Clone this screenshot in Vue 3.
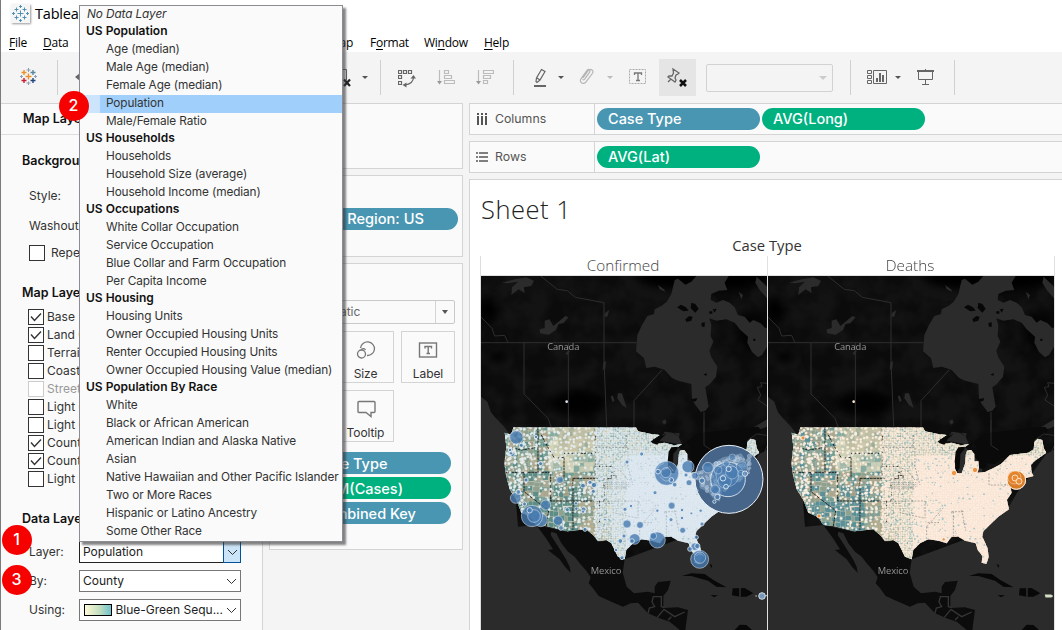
<script setup>
const menuGroups = [
  { title: 'US Population', items: ['Age (median)', 'Male Age (median)', 'Female Age (median)', 'Population', 'Male/Female Ratio'] },
  { title: 'US Households', items: ['Households', 'Household Size (average)', 'Household Income (median)'] },
  { title: 'US Occupations', items: ['White Collar Occupation', 'Service Occupation', 'Blue Collar and Farm Occupation', 'Per Capita Income'] },
  { title: 'US Housing', items: ['Housing Units', 'Owner Occupied Housing Units', 'Renter Occupied Housing Units', 'Owner Occupied Housing Value (median)'] },
  { title: 'US Population By Race', items: ['White', 'Black or African American', 'American Indian and Alaska Native', 'Asian', 'Native Hawaiian and Other Pacific Islander', 'Two or More Races', 'Hispanic or Latino Ancestry', 'Some Other Race'] },
]
const layers = [
  ['Base', 1], ['Land C', 1], ['Terrain', 0], ['Coastl', 0], ['Streets', 0, 1],
  ['Light C', 0], ['Light C', 0], ['Count', 1], ['Count', 1], ['Light S', 0],
]

// Seeded generator keeps the county pattern stable between renders
function rng(seed) {
  let s = seed
  return () => ((s = (s * 16807) % 2147483647) / 2147483647)
}
function build(kind) {
  const r = rng(4711)
  const blue = kind === 'blue'
  const teal = blue ? '#5d8d87' : '#5b9098'
  const west = [teal, teal, '#8fa08e', '#a29e86', '#aba68e', '#739e94', '#bcbea4']
  const plain = ['#d5d3b5', '#c2c9b1', '#9fb8aa', '#dedcc2', '#c9cfb9', '#86aca2']
  const cells = []
  const dots = []
  for (let y = 20; y < 440; y += 15) {
    for (let x = 76; x < 365; x += 15) {
      const north = y < 150 && x > 210 && x < 352
      const desert = y > 240 && x < 290
      const basin = (y > 150 && y < 245 && x > 135 && x < 220) || (y > 95 && y < 175 && x > 255 && x < 350)
      const c = desert ? (r() < .85 ? teal : '#8da390') : (north ? plain : west)[Math.floor(r() * 6)]
      cells.push({ x: x + r() * 7 - 3, y: y + r() * 7 - 3, w: 13 + r() * 13, h: 12 + r() * 10, c })
      if (!(desert || basin) || r() < .5) dots.push({ x: x + r() * 9, y: y + r() * 9, r: 3 + r() * 1.2 })
      if (!desert && !basin && r() < .45) dots.push({ x: x + r() * 14, y: y + r() * 14, r: 2.5 + r() * 1.4 })
      if ((x < 125 || (x > 290 && y > 170 && y < 240)) && r() < .8) dots.push({ x: x + r() * 14, y: y + r() * 14, r: 4 })
    }
  }
  const marks = []
  for (let y = 22; y < 440; y += 7) {
    for (let x = 352; x < 850; x += 7) {
      const sparse = x < 440 || y < 100 || x > 800
      if (sparse) {
        cells.push({ x: x + r() * 3, y: y + r() * 3, w: 7, h: 7, c: plain[Math.floor(r() * 6)] })
      }
      dots.push({ x: x + r() * 4, y: y + r() * 4, r: sparse ? 2.7 + r() : 3 + r() * 1.5 })
      const rough = y < 150 || (x > 660 && y < 200) || (x < 540 && y > 240)
      if (r() < (rough ? .2 : .07)) marks.push({ x: x + r() * 5, y: y + r() * 5, w: 2 + r() * 4, h: 2 + r() * 3 })
    }
  }
  return { cells, dots, marks }
}
const bubbles = [
  [115,52,20],[130,76,6],[96,90,5],[103,104,6],[99,100,5],[174,51,5],[188,131,6],[144,180,6],[246,180,10],[315,197,7],[336,187,6],[348,195,8],[346,214,6],[113,234,16],[121,216,7],[140,252,6],[203,255,15],
  [188,300,20],[162,288,32],[168,288,19],[155,271,8],[240,302,14],[268,269,6],[249,324,7],[294,250,5],[295,266,5],[317,268,7],[315,275,5],[321,328,6],
  [447,126,6],[491,102,6],[566,160,36],[564,158,15],[540,155,7],[580,180,7],[590,194,7],[630,140,18],[651,167,10],[624,165,6],[633,188,9],[690,143,16],[672,182,8],[711,208,13],
  [581,257,10],[579,299,6],[531,218,6],[538,272,5],[447,312,12],[486,315,10],[441,268,6],[459,258,5],[427,363,7],[438,348,6],[470,357,16],[462,363,7],[538,360,24],[526,348,10],[614,331,9],[672,312,6],[655,352,6],[650,380,11],[658,378,8],[636,387,7],[665,418,27],[666,413,17],[640,280,4],[612,270,5],[612,294,5],[668,272,5],[432,413,6],[414,390,5],[381,299,4],[718,231,8],[709,245,5],
]
const nyBubbles = [[750,178,52],[748,166,34],[740,184,20],[762,158,19],[792,142,17],[788,160,9],[801,161,8],[752,147,8],[720,150,12],[763,112,10],[745,130,9],[735,175,8],[714,212,12],[744,200,7]]
const deaths = [[114,54,6],[162,288,6],[567,159,8],[630,150,8],[536,358,5],[754,180,28],[748,172,20],[750,174,9],[762,184,9]]
const maps = [
  { id: 'blue', name: 'Confirmed', fill: '#dce6ee', dot: '#e4edf4', mark: '#a9c2ca', ...build('blue') },
  { id: 'orange', name: 'Deaths', fill: '#fae6d6', dot: '#fff0e3', mark: '#a5c6c6', ...build('orange') },
]
const dust = (() => {
  const r = rng(909)
  const out = []
  while (out.length < 95) {
    const x = 658 + r() * 158
    const y = 100 + r() * 130
    if (y > 150 - (x - 658) * .4 && y < 268 - (x - 658) * .68) out.push({ x, y, r: 3 + r() * 3.5 })
  }
  return out
})()
const usPath = 'M80 38L100 44L106 22L474 22L480 34L520 42L545 45L522 60L535 72L560 68L588 76L612 72L596 84L580 90L572 108L570 145L576 160L590 160L600 132L602 104L606 92L618 90L628 102L628 124L640 124L642 142L638 158L660 156L690 142L708 132L735 105L790 98L806 88L808 66L818 56L832 60L836 84L844 98L810 122L798 134L800 158L806 168L770 178L736 198L740 218L726 240L732 268L700 290L675 314L655 334L652 350L668 385L671 412L664 432L650 428L652 408L638 390L632 370L600 362L580 350L560 350L545 370L520 362L490 358L465 370L445 390L440 418L420 410L400 370L385 360L360 362L345 345L325 328L268 334L205 318L175 315L160 292L130 278L115 240L95 208L84 165L79 130L85 80Z'
</script>

<template>
  <div class="app">
    <header class="titlebar">
      <svg class="logo" width="19" height="19" viewBox="0 0 19 19">
        <g stroke="#4f91b5" stroke-width="1"><path d="M9.500 6.500v6M6.500 9.500h6M9.500 1v3M8 2.500h3M9.500 15v3M8 16.500h3M5.500 3.500v4M3.500 5.500h4M13.500 3.500v4M11.500 5.500h4M5.500 11.500v4M3.500 13.500h4M13.500 11.500v4M11.500 13.500h4M2.500 8v3M1 9.500h3M16.500 8v3M15 9.500h3" /></g>
      </svg>
      <span>Tablea</span>
    </header>
    <nav class="menubar">
      <span class="file"><u>F</u>ile</span><span class="data"><u>D</u>ata</span>
      <span class="map"><u>M</u>ap</span><span class="format">F<u>o</u>rmat</span><span class="window">Wi<u>n</u>dow</span><span><u>H</u>elp</span>
    </nav>
    <div class="toolbar">
      <svg class="t-home" width="18" height="51" viewBox="20 52 18 51" fill="none" stroke-width="1.4">
        <path stroke="#eb912c" d="M28.500 73.500v6M25.500 76.500h6M24 70v5M21.500 72.500h5" />
        <path stroke="#c72035" d="M24 78v5M21.500 80.500h5" />
        <path stroke="#1f457e" d="M33 78v5M30.500 80.500h5" />
        <path stroke="#59879b" d="M33 70v5M30.500 72.500h5" />
        <path stroke="#8ba0b8" stroke-width="1" d="M28.500 68v4M26.500 70h4M28.500 81.500v3.500M26.500 83h4M21.500 75v3M20 76.500h3M35.500 75v3M34 76.500h3" />
      </svg>
      <i class="sep s1"></i>
      <svg class="t-back" width="8" height="51" viewBox="75 52 8 51"><path d="M75 77l5-4v8z" fill="#666" /></svg>
      <svg class="t-clear" width="18" height="51" viewBox="334 52 18 51"><path d="M334 69.500h12.500v11" fill="none" stroke="#666" /><path d="M344 79.500l6 6.500M350 79.500l-6 6.500" stroke="#222" stroke-width="2.2" /></svg>
      <i class="caret c1"></i><i class="sep s2"></i>
      <svg class="t-swap" width="18" height="51" viewBox="398 52 18 51" fill="none" stroke="#666" stroke-width="1.200"><path d="M398.500 70.500h3v3h-3zM403.500 70.500h3v3h-3zM408.500 70.500h3v3h-3zM398.500 75.500h3v3h-3zM398.500 81.500h3v3h-3z" /><path d="M413.500 77q0 7-9 8" /><path d="M413.500 75l-3 3.500h5.500zM402.500 85l4-2.500v5z" fill="#666" stroke="none" /></svg>
      <svg class="t-sort" width="18" height="51" viewBox="437 52 18 51" fill="none" stroke="#bcbcbc" stroke-width="1.200"><path d="M439.500 70v13M444.500 70.500h4v3h-4zM444.500 75.500h7v3h-7zM444.500 80.500h10v3h-10z" /><path d="M437 81h5l-2.500 3.500z" fill="#999" stroke="none" /></svg>
      <svg class="t-sort" width="18" height="51" viewBox="476 52 18 51" fill="none" stroke="#bcbcbc" stroke-width="1.200"><path d="M478.500 70v13M483.500 70.500h10v3h-10zM483.500 75.500h7v3h-7zM483.500 80.500h4v3h-4z" /><path d="M476 81h5l-2.500 3.500z" fill="#999" stroke="none" /></svg>
      <i class="sep s3"></i>
      <svg class="t-pen" width="14" height="51" viewBox="533 52 14 51" fill="none" stroke="#666" stroke-width="1.200"><path d="M541.500 69.500l3.500 2-5 8.500-3 2.500-1-1 .5-3.500zM537 78l3 2" /><path d="M534 86h12" stroke-width="2" /></svg>
      <i class="caret c2"></i>
      <svg class="t-clip" width="15" height="51" viewBox="579 52 15 51" fill="none" stroke="#b5b5b5" stroke-width="1.200"><path d="M583 78l5-7q2-2.500 4-1t0 4l-6.500 8.500q-2 1.800-4 .3t-.5-4l6-8.500q1.500-1.500 2.500-.5t0 2.500l-5 7q-1 1-2 0" /></svg>
      <i class="caret c3 pale"></i>
      <svg class="t-text" width="18" height="51" viewBox="629 52 18 51"><rect x="629.500" y="69.500" width="16" height="14" fill="none" stroke="#aaa" stroke-dasharray="2 1" /><path d="M634.500 75v-2h7v2M638 73v7.500M636 80.500h4" fill="none" stroke="#777" stroke-width="1.300" /></svg>
      <div class="pin-button"><svg width="37" height="37" viewBox="659 59 37 37" fill="none" stroke="#666" stroke-width="1.300"><path d="M673 69l6 4-1 1-2 1-1 3 1 2-1 2-7-5 1-1h3l1.500-3zM671 79l-3 3" /><path d="M680 80l6 6M686 80l-6 6" stroke="#111" stroke-width="2.500" /></svg></div>
      <div class="tool-select"><i class="caret wide"></i></div>
      <i class="sep s4"></i>
      <svg class="t-chart" width="21" height="51" viewBox="867 52 21 51" fill="none" stroke="#666"><path d="M867.500 70.500h4v3h-4zM867.500 75.500h4v3h-4zM867.500 80.500h4v3h-4zM873.500 70.500h13v13h-13z" /><path d="M877 82v-4M880 82v-9M883 82v-7" stroke-width="2" /></svg>
      <i class="caret c4"></i>
      <svg class="t-show" width="18" height="51" viewBox="917 52 18 51" fill="none" stroke="#666"><path d="M917 71h17" stroke-width="2" /><path d="M918.500 71v8.500h14V71M925.500 69v2M925.500 80v4M922 84.500h7" /></svg>
      <i class="sep s5"></i>
    </div>

    <main class="content">
      <aside class="layers">
        <div class="pane-title">Map Layers</div>
        <h3 class="h-bg">Backgrou</h3>
        <div class="line style-line">Style:</div>
        <div class="line wash-line">Washout</div>
        <div class="line repeat"><i class="check"></i>Repe</div>
        <h3 class="h-layers">Map Laye</h3>
        <div class="checks">
          <div v-for="(l, i) in layers" :key="i" class="layer" :class="{ disabled: l[2] }">
            <i class="check"><svg v-if="l[1]" width="14" height="14" viewBox="0 0 14 14"><path d="M2 6.500l3.500 4L12 3.500" fill="none" stroke="#333" stroke-width="1.400" /></svg></i>{{ l[0] }}
          </div>
        </div>
        <h3 class="h-data">Data Laye</h3>
        <div class="field"><label>Layer:</label><div class="select open"><span>Population</span><b><svg width="11" height="7" viewBox="0 0 11 7"><path d="M1 1l4.500 4.500L10 1" fill="none" stroke="#333" /></svg></b></div></div>
        <div class="field"><label>By:</label><div class="select"><span>County</span><b><svg width="11" height="7" viewBox="0 0 11 7"><path d="M1 1l4.500 4.500L10 1" fill="none" stroke="#333" /></svg></b></div></div>
        <div class="field"><label>Using:</label><div class="select"><i class="ramp"></i><span class="tight">Blue-Green Sequ...</span><b><svg width="11" height="7" viewBox="0 0 11 7"><path d="M1 1l4.500 4.500L10 1" fill="none" stroke="#333" /></svg></b></div></div>
      </aside>

      <section class="cards">
        <div class="card pages"></div>
        <div class="card filters"><div class="pill teal">Country Region: US</div></div>
        <div class="card marks">
          <div class="mark-type"><span>Automatic</span><b><i class="caret big"></i></b></div>
          <div class="buttons">
            <div class="mark"></div>
            <div class="mark"><svg width="20" height="20" viewBox="0 0 20 20" fill="none" stroke="#777" stroke-width="1.300"><path d="M4.500 8a7 6.800 0 1 1 6.500 7.500" /><circle cx="5.500" cy="14" r="4" /><path d="M5 9.500q3-2 4.500.5" /></svg><span>Size</span></div>
            <div class="mark"><svg width="20" height="20" viewBox="0 0 20 20" fill="none" stroke="#777" stroke-width="1.400"><rect x="1.500" y="3" width="17" height="14" /><path d="M7 8.500v-2h6.500v2M10.200 6.500v7M8.500 13.500h3.500" /></svg><span>Label</span></div>
            <div class="mark"></div>
            <div class="mark"><svg width="20" height="20" viewBox="0 0 20 20" fill="none" stroke="#777" stroke-width="1.400"><path d="M2 3.500q0-1 1-1h15q1 0 1 1v9q0 1-1 1h-3v4l-5-4H3q-1 0-1-1z" /></svg><span>Tooltip</span></div>
          </div>
          <div class="pill teal m1">Case Type</div>
          <div class="pill green m2">SUM(Cases)</div>
          <div class="pill teal m3">Combined Key</div>
        </div>
      </section>

      <section class="view">
        <div class="shelf">
          <div class="shelf-name"><svg width="12" height="12" viewBox="0 0 12 12" stroke="#555" stroke-width="2"><path d="M2 0v2M6 0v2M10 0v2M2 3v9M6 3v9M10 3v9" /></svg>Columns</div>
          <div class="pill teal">Case Type</div><div class="pill green">AVG(Long)</div>
        </div>
        <div class="shelf">
          <div class="shelf-name"><svg width="12" height="12" viewBox="0 0 12 12" stroke="#555" stroke-width="1.600"><path d="M0 2h2M0 6h2M0 10h2M3 2h9M3 6h9M3 10h9" /></svg>Rows</div>
          <div class="pill green">AVG(Lat)</div>
        </div>
        <div class="sheet">
          <h1>Sheet 1</h1>
          <div class="dimension">Case Type</div>
          <div class="maps">
            <figure v-for="m in maps" :key="m.id">
              <figcaption>{{ m.name }}</figcaption>
              <svg width="286" height="354" viewBox="9 -432 858 1062">
                <defs>
                  <clipPath :id="'us-' + m.id"><path :d="usPath" /></clipPath>
                  <filter :id="'land-' + m.id" x="0" y="0" width="100%" height="100%" color-interpolation-filters="sRGB"><feTurbulence type="fractalNoise" baseFrequency=".014" numOctaves="3" seed="8" /><feColorMatrix values="0 0 0 0 .075  0 0 0 0 .075  0 0 0 0 .075  3 0 0 0 -1" /></filter>
                  <filter :id="'soft-' + m.id" x="-50%" y="-50%" width="200%" height="200%"><feGaussianBlur stdDeviation="12" /></filter>
                </defs>
                <rect x="9" y="-432" width="861" height="1062" fill="#0b0b0b" />
                <rect x="9" y="-432" width="861" height="1062" :filter="`url(#land-${m.id})`" />
                <g :filter="`url(#soft-${m.id})`" fill="#020202"><ellipse cx="300" cy="-50" rx="85" ry="40" opacity=".9" /><ellipse cx="680" cy="-425" rx="200" ry="35" /><ellipse cx="820" cy="-270" rx="50" ry="60" opacity=".7" /><ellipse cx="60" cy="-190" rx="30" ry="16" /><ellipse cx="30" cy="-330" rx="25" ry="35" /></g>
                <g transform="translate(0 -510)">
                  <g fill="#2b2b2b">
                    <path d="M590 90L600 86L622 104L640 95L655 78L752 78L740 98L748 120L722 122L700 132L698 150L715 158L735 150L755 158L770 172L780 195L800 200L815 218L826 210L848 220L862 235L867 232V290L852 315L840 322L822 306L808 278L810 260L785 238L770 218L745 208L715 212L694 205L700 225L698 258L706 275L694 302L700 322L718 350L714 380L695 403L682 412L692 470L682 482L668 486L650 462L642 445L640 402L600 392L582 384L560 360L530 350L505 354L498 325L474 304L478 255L492 225L508 198L528 192L530 178L550 168L566 155L580 132Z" />
                    <path d="M72 98L110 88L145 82L168 92L160 108L138 112L140 130L122 118L100 135L102 112L120 95L90 100ZM185 238L200 234L200 212L214 208L226 228L262 198L272 202L256 220L242 222L234 240L212 254L186 250ZM420 430L432 430L446 474L432 465L418 445ZM398 440L404 436L410 452L404 456ZM376 338L384 332L382 355L374 360ZM836 80L867 110V145L845 120L832 98ZM782 125L795 135L790 148ZM540 105L558 118L562 126L545 118ZM380 190L394 180L388 200L380 200ZM552 514l10-6 4 10-8 6zM545 570L560 545L605 550L602 570ZM262 310L270 302L276 304L268 316ZM810 560L830 530L867 508V530L835 542Z" />
                    <path d="M9 440L28 455L38 485L50 500L78 530L90 545L102 570H9Z" />
                  </g>
                  <path fill="#070707" d="M622 208l12-10 10 2-4 12-15 4zM597 172l12-8 15 8 8 10-16 2zM640 158l12 4 10 14-10 12-14-14zM670 220l10-4v14h-8zM640 448l18-4-4 10h-12zM676 374l10-5v8zM704 178l12-2-6 12zM694 184h9v7h-9zM826 266h6v7h-6z" />
                  <path fill="none" stroke="#2e2e2e" stroke-width="3" d="M188 78L238 118L268 122L292 142L378 158V330L386 530M9 278H476M138 278V432L210 505L220 532M271 278V532M468 530V452L552 360M678 486V570M10 202L42 235L50 258L80 256L90 278M867 400L848 398L852 410L838 412L848 435L840 450L858 462L867 468" />
                </g>
                <path fill="#2b2b2b" d="M9 30L42 0L98 44L120 320L175 315L205 318L268 334L345 345L400 370L440 418L650 340L680 300L732 260L755 220L790 175L842 104L870 88V630H9Z" />
                <path fill="#2b2b2b" d="M572 85L600 80L640 124L652 150L650 163L575 170ZM545 62L555 42L580 38L602 50L612 74Z" />
                <path fill="#0a0a0a" d="M600 84L616 85L625 66L602 48L580 36L555 42L530 45L585 36L608 52L635 80L642 120L640 145L660 146L665 130L690 132L710 115L735 104L790 96L804 88L808 70L822 54L850 30L840 20L660 40Z" />
                <path fill="none" stroke="#2b2b2b" stroke-width="3" d="M678 0V76L700 90M808 62L835 42L867 46M842 104L860 96L867 78" />
                <path fill="#0c0c0c" d="M175 315L268 336L325 334L345 345L360 366L385 362L400 370L418 408L440 418L434 458L446 500L468 520L510 515L530 520L530 500L540 486L578 482L570 510L556 528L556 564L600 562L630 570L622 630H605L575 605L545 595L510 580L480 548L458 550L435 560L400 545L362 528L345 505L332 490L338 472L325 452L305 430L290 410L270 395L250 370L235 340L220 335L218 345L238 376L250 395L264 418L275 440L278 458L262 442L245 418L222 400L210 390L225 388L204 355Z" />
                <path fill="#080808" d="M612 468L640 460L680 462L706 480L745 502L715 500L690 482L640 468ZM764 505L800 504L826 520L805 530L786 530L762 526ZM698 525L720 526L708 532ZM695 432L703 436L700 444ZM770 630L785 614L805 615L820 628V630Z" />
                <path fill="none" stroke="#353535" stroke-width="4" d="M510 580L514 564L530 560L522 546L526 530H550V560L560 562M538 592L558 568L590 590L620 576M570 600L580 590M786 504V530" />
                <g :clip-path="`url(#us-${m.id})`">
                  <rect x="70" y="20" width="800" height="430" :fill="m.fill" />
                  <rect v-for="(c, i) in m.cells" :key="'c' + i" :x="c.x" :y="c.y" :width="c.w" :height="c.h" :fill="c.c" :stroke="c.x < 350 ? '#c1c2ad' : 'none'" />
                  <path fill="#b9b193" opacity=".45" d="M230 22h130v70H250zM320 320h80v45h-70zM120 100h60v55h-60zM295 245h70v75h-60z" />
                  <path fill="none" stroke="#111" stroke-width="3" stroke-dasharray="8 2" opacity=".85" d="M80 157H218V243H378M180 22V157M190 45L215 92L230 115L258 112V175M258 100H352V22M352 100V175M285 175V330M285 175H378V243M365 243V322M138 157V215L212 272L205 318M352 139H400M100 83L130 90L180 82" />
                  <circle v-for="(d, i) in m.dots" :key="'d' + i" :cx="d.x" :cy="d.y" :r="d.r" :fill="m.dot" :stroke="d.x > 352 ? (m.id === 'blue' ? '#c3d2dc' : '#edd9c6') : '#f2f0e4'" stroke-width=".7" :opacity="d.x > 440 ? .85 : .95" />
                  <rect v-for="(d, i) in m.marks" :key="'m' + i" :x="d.x" :y="d.y" :width="d.w" :height="d.h" :fill="m.mark" />
                  <path fill="none" stroke="#29383e" stroke-width="1.800" stroke-dasharray="6 4" opacity=".6" d="M352 82H450V140L465 195M400 139L430 155L450 180M378 243H480V295M380 250H405V278L480 295M445 45V80M485 320L538 260M485 320V345M565 275V350M590 270L602 332M488 308H522M560 275H600M672 160V195H735" />
                  <path fill="none" stroke="#5d6469" stroke-width="1.500" stroke-dasharray="4 3" opacity=".7" d="M380 188H458M380 194H458M380 200H458M380 206H450M388 170V210M402 170V210M416 170V210M430 185V210M444 185V210" />
                  <path d="M388 176h12v-10h14v10M400 158l10-4" fill="none" stroke="#111" stroke-width="2.500" stroke-dasharray="7 2" />
                  <path v-if="m.id === 'blue'" fill="#dfe9f2" opacity=".4" d="M450 90H570V150H650L730 130V280L650 350L450 360L400 350V150Z" />
                </g>
                <path fill="#080808" d="M572 95L580 82L600 80L598 88L586 102L584 145L574 158L569 125ZM518 64L550 48L565 42L548 58L538 74L524 70Z" />
                <g v-if="m.id === 'blue'" fill="#477bb0" stroke="#e9f1f8" stroke-width="2.500">
                  <circle cx="753" cy="178" r="102" fill="#466589" stroke-width="3" />
                  <path fill="#94b1ce" stroke="none" opacity=".5" d="M662 160L690 138L735 112L790 100L806 125L798 145L806 167L735 205L725 245L705 235L690 215L665 205Z" />
                  <circle v-for="(d, i) in dust" :key="'w' + i" :cx="d.x" :cy="d.y" :r="d.r" fill="#9bb8d4" stroke-width="1.300" opacity=".65" />
                  <circle v-for="(b, i) in nyBubbles" :key="'n' + i" :cx="b[0]" :cy="b[1]" :r="b[2]" fill-opacity=".6" :stroke-opacity="b[2] > 50 || b[2] < 9 ? 1 : .45" />
                  <circle v-for="(b, i) in bubbles" :key="'b' + i" :cx="b[0]" :cy="b[1]" :r="b[2]" fill-opacity=".8" :stroke-opacity="b[2] > 9 ? .6 : .9" />
                  <path fill="none" stroke="#c8dbeb" stroke-width="2" opacity=".7" d="M98 44l10-16 8 6 8-8 8 16M535 150q8-18 22-20m-10 40q15 22 32 8M555 150l20-10 12 14M655 408q10-14 22 0" />
                  <circle cx="852" cy="528" r="10" fill="#7798b8" />
                  <path d="M832 528h5M862 527h5" stroke="#dcebdc" />
                </g>
                <g v-else fill="#ec8b32" stroke="#fff2e5" stroke-width="2.500">
                  <circle cx="754" cy="180" r="28" fill="#bd6a20" />
                  <circle v-for="(b, i) in deaths" :key="'o' + i" :cx="b[0]" :cy="b[1]" :r="b[2]" :fill-opacity="b[2] > 10 ? .55 : .9" :stroke-opacity="b[2] === 20 ? .5 : 1" />
                  <path d="M840 524h18l6 4-5 4h-17z" fill="#cfe0c4" stroke-width="1" />
                </g>
                <circle cx="266" cy="-55" r="4" :fill="m.fill" />
                <text x="208" y="-210" textLength="96" class="place">Canada</text>
                <text x="338" y="461" textLength="92" class="place">Mexico</text>
              </svg>
            </figure>
          </div>
        </div>
      </section>
    </main>

    <div class="dropdown">
      <div class="none">No Data Layer</div>
      <template v-for="g in menuGroups" :key="g.title">
        <div class="group">{{ g.title }}</div>
        <div v-for="it in g.items" :key="it" class="option" :class="{ active: it === 'Population' }"><span>{{ it }}</span></div>
      </template>
    </div>
    <div class="badge one">1</div><div class="badge two">2</div><div class="badge three">3</div>
  </div>
</template>

<style>
html, body { overflow: hidden; }
</style>
<style scoped>
* { box-sizing: border-box; }
.app { position: relative; width: 1062px; height: 630px; overflow: hidden; background: #fff; font: 12.5px/18px Inter, "Open Sans", sans-serif; color: #333; white-space: nowrap; border-left: 1px solid #7b7b7b; }
svg { display: block; flex: none; overflow: hidden; }
.titlebar { height: 31px; display: flex; align-items: flex-start; padding: 4px 0 0 10px; font: 14.5px/20px "Open Sans", sans-serif; color: #000; letter-spacing: -.2px; }
.logo { background: #f5f5f5; box-shadow: 1px 1px 2px #999; margin-right: 5px; }
.menubar { height: 21px; display: flex; padding-left: 8px; font: 12px/23px "Open Sans", sans-serif; color: #000; letter-spacing: -.25px; }
.menubar u { text-underline-offset: 2px; }
.file { width: 34px; } .data { width: 286px; } .map { width: 41px; } .format { width: 54px; } .window { width: 60px; }
.toolbar { height: 51px; display: flex; align-items: center; background: #f4f4f4; }
.toolbar > * { flex: none; }
.sep { width: 1px; height: 35px; background: #d0d0d0; }
.caret { width: 0; height: 0; border: 3px solid transparent; border-top-color: #555; border-bottom: 0; }
.caret.pale { border-top-color: #bbb; }
.t-home { margin-left: 19px; } .s1 { margin-left: 19px; } .t-back { margin-left: 17px; } .t-clear { margin-left: 251px; } .c1 { margin-left: 10px; } .s2 { margin-left: 12px; }
.t-swap { margin-left: 17px; } .t-sort { margin-left: 21px; } .s3 { margin-left: 19px; } .t-pen { margin-left: 19px; } .c2 { margin-left: 11px; } .t-clip { margin-left: 15px; } .c3 { margin-left: 13px; } .t-text { margin-left: 16px; }
.pin-button { margin-left: 12px; width: 37px; height: 37px; background: #e5e5e5; }
.tool-select { width: 127px; height: 28px; margin-left: 10px; border: 1px solid #d2d2d2; border-radius: 2px; display: flex; align-items: center; justify-content: flex-end; padding-right: 5px; }
.caret.wide { border-width: 4px 4px 0; border-top-color: #ccc; }
.s4 { margin-left: 17px; } .t-chart { margin-left: 16px; } .c4 { margin-left: 7px; } .t-show { margin-left: 16px; } .s5 { margin-left: 19px; }
.content { height: 527px; display: flex; background: #f4f4f4; }
.layers { width: 262px; flex: none; background: #fafafa; border-right: 1px solid #d4d4d4; border-top: 1px solid #d4d4d4; }
.pane-title { height: 31px; padding: 6px 0 0 22px; border-bottom: 1px solid #dedede; font-weight: 600; color: #111; }
h3 { margin: 0; padding-left: 21px; font: 600 12.5px/18px Inter, sans-serif; color: #111; }
.h-bg { margin-top: 17px; }
.line { padding-left: 28px; font-size: 12px; }
.style-line { margin-top: 17px; } .wash-line { margin-top: 12px; }
.repeat { display: flex; align-items: center; margin-top: 9px; gap: 6px; }
.check { width: 16px; height: 16px; flex: none; border: 1px solid #333; background: #fff; }
.h-layers { margin-top: 22px; }
.checks { margin-top: 6px; padding-left: 27px; }
.layer { height: 18px; display: flex; align-items: center; gap: 3px; font-size: 12px; }
.disabled { color: #999; } .disabled .check { border-color: #ccc; }
.h-data { margin-top: 22px; margin-bottom: 13px; }
.field { display: flex; align-items: center; height: 22px; margin-bottom: 7px; padding-left: 28px; font-size: 12px; }
.field label { width: 50px; flex: none; }
.select { width: 162px; height: 22px; border: 1px solid #777; background: #fff; display: flex; align-items: center; color: #222; font-size: 12px; }
.select span { padding-left: 3px; flex: 1; }
.select b { width: 18px; height: 20px; display: flex; align-items: center; justify-content: center; }
.open { border-color: #222; }
.open b { background: #cce4f7; outline: 1px solid #005499; width: 16px; }
.ramp { width: 30px; height: 12px; margin-left: 4px; border: 1px solid #000; background: linear-gradient(90deg, #fff9d6, #c3e0c0 55%, #72c2cf); }
.cards { width: 206px; flex: none; padding-left: 6px; }
.card { width: 194px; border: 1px solid #d4d4d4; background: #fafafa; }
.pages { height: 66px; } .filters { height: 82px; margin: 6px 0; padding-top: 32px; } .marks { height: 287px; padding-top: 36px; }
.pill { height: 22px; border-radius: 11px; color: #fff; font: 500 14.5px/22px Inter, sans-serif; padding-left: 11px; }
.teal { background: #4996b2; } .green { background: #00b180; }
.filters .pill { width: 182px; margin-left: 6px; padding-left: 11px; font-size: 14.6px; }
.mark-type { width: 179px; height: 24px; margin-left: 6px; border: 1px solid #c9c9c9; border-radius: 2px; display: flex; line-height: 22px; padding-left: 26px; font-size: 12px; color: #666; }
.mark-type span { flex: 1; } .mark-type b { width: 19px; border-left: 1px solid #d4d4d4; display: flex; align-items: center; justify-content: center; }
.caret.big { border-width: 4px 3.5px 0; }
.buttons { display: grid; grid-template-columns: repeat(3, 54px); gap: 7px; margin: 7px 0 0 9px; }
.mark { height: 52px; border: 1px solid #d4d4d4; display: flex; flex-direction: column; align-items: center; justify-content: flex-end; gap: 5px; font-size: 12px; line-height: 16px; }
.mark svg { position: relative; left: -1px; top: -1px; }
.mark span { margin-right: 3px; letter-spacing: -.1px; }
.mark:nth-child(3) span, .mark:nth-child(3) svg { margin-right: 0; left: 0; }
.marks .pill { width: 175px; margin: 3px 0 0 6px; line-height: 23px; }
.marks .m1 { margin-top: 10px; padding-left: 38px; } .marks .m2 { padding-left: 40px; } .marks .m3 { padding-left: 39px; }
.view { flex: 1; min-width: 0; }
.shelf { height: 32px; margin-bottom: 6px; border: 1px solid #d4d4d4; border-right: 0; background: #fafafa; display: flex; align-items: center; gap: 2px; }
.shelf-name { width: 125px; height: 30px; border-right: 1px solid #d4d4d4; display: flex; align-items: center; gap: 7px; padding-left: 6px; color: #555; font-size: 12.3px; }
.shelf .pill { width: 163px; margin-bottom: 1px; line-height: 21px; }
.sheet { height: 452px; border: 1px solid #d4d4d4; border-right: 0; background: #fff; padding-left: 11px; }
h1 { margin: 11px 0 0; font: 300 25.5px/36px "Open Sans", sans-serif; color: #222; letter-spacing: .5px; }
.dimension { width: 572px; margin-top: 8px; text-align: center; font: 14.8px/20px "Open Sans", sans-serif; color: #333; height: 21px; }
.maps { display: flex; width: 575px; margin-left: -1px; border-left: 1px solid #ddd; }
figure { margin: 0; width: 287px; border-right: 1px solid #e1e1e1; }
figcaption { height: 20px; border-bottom: 1px solid #e1e1e1; padding-right: 2px; text-align: center; font: 300 15.3px/19px "Open Sans", sans-serif; color: #444; }
.place { font: 28px "Open Sans", sans-serif; fill: #959595; }
.dropdown { position: absolute; left: 78px; top: 5px; width: 264px; height: 537px; padding-top: 1px; border: 1px solid #8b8b91; background: #fafafa; box-shadow: 3px 3px 2px rgba(50, 50, 50, .6); color: #333; }
.none { height: 17px; padding-left: 7px; line-height: 14px; font-style: italic; font-size: 11.8px; letter-spacing: -.1px; }
.group { height: 17px; padding-left: 6px; line-height: 14px; font-size: 12px; font-weight: 600; color: #111; }
.option { height: 18px; padding-left: 20px; line-height: 17px; font-size: 11.8px; letter-spacing: -.11px; }
.option span { display: block; padding-left: 6px; height: 18px; }
.active { background: #cce5fd; } .active span { background: #a0cffb; }
.badge { position: absolute; width: 30px; height: 30px; border-radius: 50%; background: #f70000; color: #fff; text-align: center; font: 500 16px/29px Inter, sans-serif; padding-right: 1px; }
.one { left: 1px; top: 525px; } .two { left: 58px; top: 91px; } .three { left: 1px; top: 565px; }
</style>
